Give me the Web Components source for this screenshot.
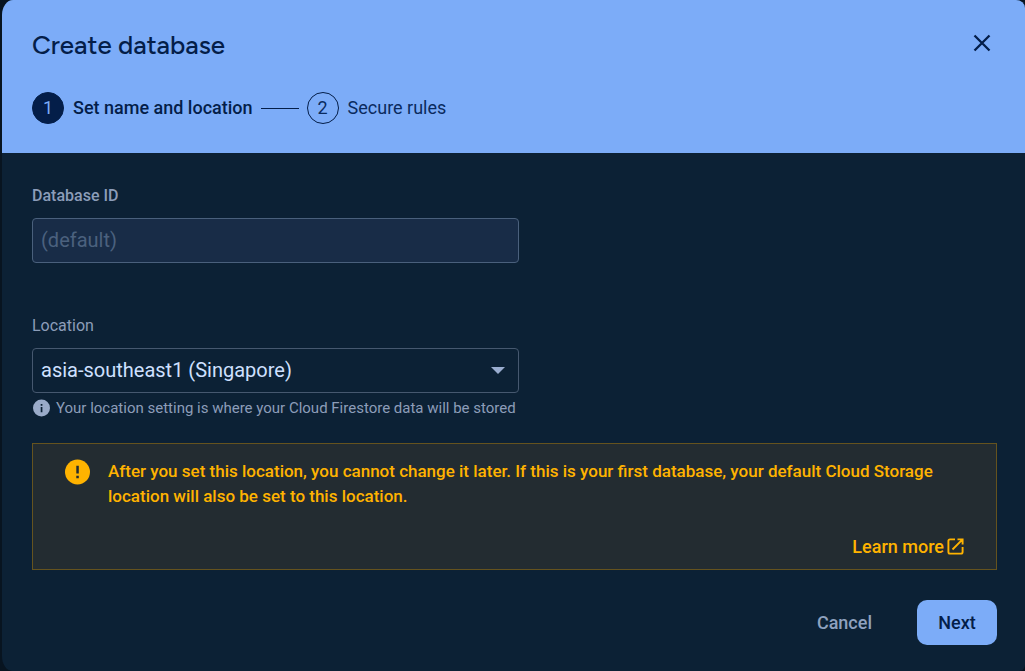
<!DOCTYPE html>
<html lang="en">
<head>
<meta charset="utf-8">
<title>Create database</title>
<style>
  html { height: 100%; background: #081420; }
  body { margin: 0; min-height: 100%; display: flex; font-family: Roboto, sans-serif; }
</style>
</head>
<body>
<create-database-dialog></create-database-dialog>
<script>
  const define = (name, html, setup) => {
    const template = document.createElement('template');
    template.innerHTML = html;
    customElements.define(name, class extends HTMLElement {
      constructor() {
        super();
        this.attachShadow({ mode: 'open' }).append(template.content.cloneNode(true));
      }
      connectedCallback() { if (setup) setup(this, this.shadowRoot); }
    });
  };

  define('step-item', `
    <style>
      :host { display: flex; align-items: center; gap: 9px; font-size: 18px; line-height: 24px; color: #0a2a5e; }
      .num { box-sizing: border-box; width: 32px; height: 32px; border: 1px solid #041e49; border-radius: 50%;
             display: flex; align-items: center; justify-content: center; }
      :host([active]) { color: #041e49; font-weight: 500; }
      :host([active]) .num { background: #041e49; color: #7cacf8; font-weight: 400; }
    </style>
    <span class="num"></span><span><slot></slot></span>`,
    (el, root) => { root.querySelector('.num').textContent = el.getAttribute('number'); });

  define('dialog-header', `
    <style>
      :host { display: block; padding: 28px 31px 29px; background: #7cacf8; color: #041e49; }
      .top { display: flex; justify-content: space-between; align-items: flex-start; }
      h1 { margin: 0; font: 500 26px/34px Figtree, "Google Sans", Lato, sans-serif; }
      button { display: block; padding: 0; border: 0; background: none; color: inherit; }
      svg { display: block; }
      nav { display: flex; align-items: center; gap: 8px; margin-top: 30px; }
      .line { width: 38px; height: 1px; background: #041e49; }
    </style>
    <div class="top">
      <h1>Create database</h1>
      <button type="button" aria-label="Close">
        <svg width="24" height="30" viewBox="0 0 24 30" fill="none" stroke="currentColor" stroke-width="2.3"><path d="M4.5 7.5l15 15M19.5 7.5l-15 15"/></svg>
      </button>
    </div>
    <nav aria-label="Steps">
      <step-item number="1" active>Set name and location</step-item>
      <span class="line"></span>
      <step-item number="2">Secure rules</step-item>
    </nav>`);

  define('id-field', `
    <style>
      :host { display: block; }
      label { display: block; font-size: 16px; line-height: 24px; font-weight: 500; color: #8c9db9; }
      input { display: block; box-sizing: border-box; width: 100%; height: 45px; margin: 10px 0 0; padding: 0 8px 2px;
              border: 1px solid #4a607c; border-radius: 4px; background: #182c47; color: #c8dcff; font: 400 20px Roboto, sans-serif; }
      input::placeholder { color: #4b617e; opacity: 1; }
    </style>
    <label for="id">Database ID</label>
    <input id="id" type="text" placeholder="(default)">`);

  define('location-field', `
    <style>
      :host { display: block; }
      label { display: block; font-size: 16px; line-height: 24px; color: #8c9db9; }
      .box { display: grid; margin-top: 10px; align-items: center; }
      select { grid-area: 1 / 1; appearance: none; box-sizing: border-box; width: 100%; height: 45px; margin: 0; padding: 0 36px 2px 8px;
               border: 1px solid #46586f; border-radius: 4px; background: transparent; color: #cfe0ff; font: 400 20px Roboto, sans-serif; }
      .arrow { grid-area: 1 / 1; justify-self: end; margin-right: 14px; pointer-events: none; }
      .hint { display: flex; align-items: center; gap: 6px; margin: 5px 0 0; font-size: 15px; line-height: 20px; color: #8c9db9; white-space: nowrap; }
    </style>
    <label for="loc">Location</label>
    <div class="box">
      <select id="loc" aria-describedby="hint"><option>asia-southeast1 (Singapore)</option></select>
      <svg class="arrow" width="14" height="7" viewBox="0 0 14 7"><path d="M0 0h14L7 7z" fill="#9aadd0"/></svg>
    </div>
    <p class="hint" id="hint">
      <svg width="18" height="18" viewBox="0 0 18 18"><circle cx="9.5" cy="9" r="8.5" fill="#9aabc9"/><path d="M8.7 5h1.7v1.7H8.7zM8.7 8h1.7v5.2H8.7z" fill="#0c2135"/></svg>
      <span>Your location setting is where your Cloud Firestore data will be stored</span>
    </p>`);

  define('warning-box', `
    <style>
      :host { display: block; padding: 15px 32px 10px; border: 1px solid #65531e; background: #232c31; color: #ffb300;
              font-size: 18px; line-height: 25px; font-weight: 500; }
      .row { display: flex; align-items: flex-start; gap: 17px; }
      .row svg { flex: none; }
      p { margin: 0; font-size: 17px; }
      .more { display: flex; justify-content: flex-end; margin-top: 25px; }
      a { display: flex; align-items: center; gap: 3px; color: inherit; text-decoration: none; }
    </style>
    <div class="row">
      <svg width="26" height="26" viewBox="0 0 26 26"><circle cx="12.5" cy="13" r="12.5" fill="#ffb300"/><path d="M11.3 6.8h2.5v7.7h-2.5zM11.3 16.8h2.5v2.4h-2.5z" fill="#232c31"/></svg>
      <p><slot></slot></p>
    </div>
    <div class="more"><a href="#learn-more">Learn more
      <svg width="17" height="17" viewBox="0 0 17 17" fill="none" stroke="currentColor" stroke-width="1.9"><path d="M8 1.4H3Q1.4 1.4 1.4 3v11q0 1.6 1.6 1.6h11q1.6 0 1.6-1.6V9M10.5 1.4h5.1v5.1M15.3 1.7L5.5 11.5"/></svg></a></div>`);

  define('dialog-actions', `
    <style>
      :host { display: flex; justify-content: flex-end; gap: 24px; }
      button { height: 45px; padding: 0 21px; border: 0; border-radius: 10px; font: 500 18px/24px Roboto, sans-serif; }
      .cancel { background: none; color: #8fa1bf; }
      .next { min-width: 80px; background: #7cacf8; color: #041e49; }
    </style>
    <button type="button" class="cancel">Cancel</button>
    <button type="button" class="next">Next</button>`);

  define('create-database-dialog', `
    <style>
      :host { display: block; flex: 1; min-width: 0; margin-left: 2px; overflow: hidden; background: #0c2135;
              border-radius: 11px 9px 6px 10px / 15px 8px 6px 15px; }
      main { padding: 31px 28px 26px 30px; }
      dialog-header { padding-left: 30px; }
      .field { max-width: 487px; }
      location-field { margin-top: 51px; }
      warning-box { margin-top: 25px; }
      dialog-actions { margin-top: 30px; }
    </style>
    <dialog-header></dialog-header>
    <main>
      <id-field class="field"></id-field>
      <location-field class="field"></location-field>
      <warning-box>After you set this location, you cannot change it later. If this is your first database, your default Cloud Storage location will also be set to this location.</warning-box>
      <dialog-actions></dialog-actions>
    </main>`);
</script>
</body>
</html>
